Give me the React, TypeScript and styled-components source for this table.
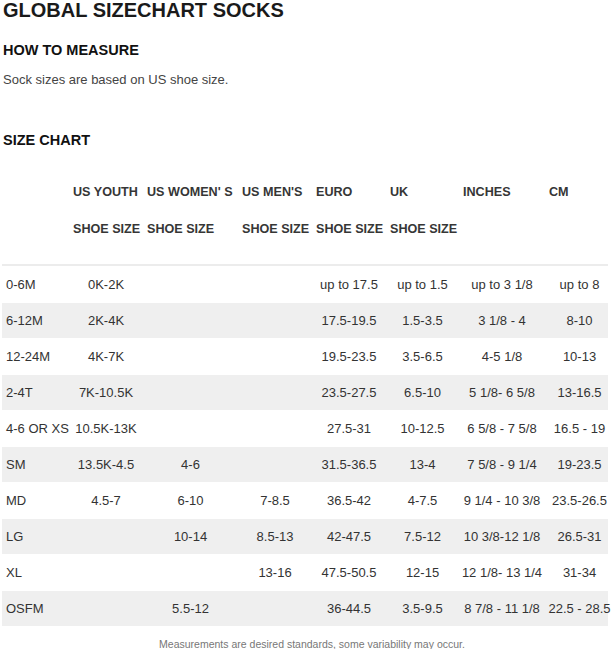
import React from "react";
import styled, { createGlobalStyle } from "styled-components";

const Global = createGlobalStyle`
  html, body { margin: 0; padding: 0; background: #fff; }
  body { font-family: "Liberation Sans", Arial, sans-serif; color: #333; }
`;

const Page = styled.div`
  width: 613px;
  padding-left: 3px;
  box-sizing: border-box;
`;

const Title = styled.h1`
  margin: 0;
  font-size: 20px;
  line-height: 20px;
  font-weight: bold;
  color: #1a1a1a;
`;

const Heading = styled.h2<{ $top: number }>`
  margin: ${(p) => p.$top}px 0 0;
  font-size: 14.5px;
  line-height: 14.5px;
  font-weight: bold;
  color: #111;
`;

const Intro = styled.p`
  margin: 15.5px 0 0;
  font-size: 13px;
  line-height: 13px;
  color: #444;
`;

const Table = styled.div`
  margin: 38.5px 0 0 -1px;
  width: 606px;
`;

const COLS = "67px 74px 95px 74px 74px 73px 86px 69px";

const HeadRow = styled.div<{ $gap: number }>`
  display: grid;
  grid-template-columns: ${COLS};
  margin-top: ${(p) => p.$gap}px;
  height: 13px;
`;

const HeadCell = styled.div`
  padding-left: 4px;
  font-size: 12.6px;
  line-height: 13px;
  font-weight: bold;
  color: #363636;
  white-space: nowrap;
`;

const Rule = styled.div`
  margin-top: 28px;
  height: 2px;
  background: #ececec;
`;

const Row = styled.div<{ $striped: boolean }>`
  display: grid;
  grid-template-columns: ${COLS};
  height: 35px;
  margin-top: 1px;
  align-items: center;
  background: ${(p) => (p.$striped ? "#efefef" : "#fff")};
`;

const Cell = styled.div<{ $first?: boolean }>`
  font-size: 13px;
  line-height: 13px;
  color: #333;
  white-space: nowrap;
  text-align: ${(p) => (p.$first ? "left" : "center")};
  padding-left: ${(p) => (p.$first ? "4px" : "0")};
`;

const Note = styled.p`
  margin: 13px 0 0;
  padding-left: 6px;
  width: 606px;
  text-align: center;
  font-size: 10.5px;
  line-height: 10px;
  color: #777;
`;

const head1 = ["", "US YOUTH", "US WOMEN' S", "US MEN'S", "EURO", "UK", "INCHES", "CM"];
const head2 = ["", "SHOE SIZE", "SHOE SIZE", "SHOE SIZE", "SHOE SIZE", "SHOE SIZE", "", ""];

const rows: string[][] = [
  ["0-6M", "0K-2K", "", "", "up to 17.5", "up to 1.5", "up to 3 1/8", "up to 8"],
  ["6-12M", "2K-4K", "", "", "17.5-19.5", "1.5-3.5", "3 1/8 - 4", "8-10"],
  ["12-24M", "4K-7K", "", "", "19.5-23.5", "3.5-6.5", "4-5 1/8", "10-13"],
  ["2-4T", "7K-10.5K", "", "", "23.5-27.5", "6.5-10", "5 1/8- 6 5/8", "13-16.5"],
  ["4-6 OR XS", "10.5K-13K", "", "", "27.5-31", "10-12.5", "6 5/8 - 7 5/8", "16.5 - 19"],
  ["SM", "13.5K-4.5", "4-6", "", "31.5-36.5", "13-4", "7 5/8 - 9 1/4", "19-23.5"],
  ["MD", "4.5-7", "6-10", "7-8.5", "36.5-42", "4-7.5", "9 1/4 - 10 3/8", "23.5-26.5"],
  ["LG", "", "10-14", "8.5-13", "42-47.5", "7.5-12", "10 3/8-12 1/8", "26.5-31"],
  ["XL", "", "", "13-16", "47.5-50.5", "12-15", "12 1/8- 13 1/4", "31-34"],
  ["OSFM", "", "5.5-12", "", "36-44.5", "3.5-9.5", "8 7/8 - 11 1/8", "22.5 - 28.5"],
];

export default function App() {
  return (
    <>
      <Global />
      <Page>
        <Title>GLOBAL SIZECHART SOCKS</Title>
        <Heading $top={23}>HOW TO MEASURE</Heading>
        <Intro>Sock sizes are based on US shoe size.</Intro>
        <Heading $top={47}>SIZE CHART</Heading>
        <Table>
          <HeadRow $gap={0}>
            {head1.map((h, i) => (
              <HeadCell key={i}>{h}</HeadCell>
            ))}
          </HeadRow>
          <HeadRow $gap={24}>
            {head2.map((h, i) => (
              <HeadCell key={i}>{h}</HeadCell>
            ))}
          </HeadRow>
          <Rule />
          {rows.map((r, ri) => (
            <Row key={ri} $striped={ri % 2 === 1}>
              {r.map((c, ci) => (
                <Cell key={ci} $first={ci === 0}>
                  {c}
                </Cell>
              ))}
            </Row>
          ))}
        </Table>
        <Note>Measurements are desired standards, some variability may occur.</Note>
      </Page>
    </>
  );
}
